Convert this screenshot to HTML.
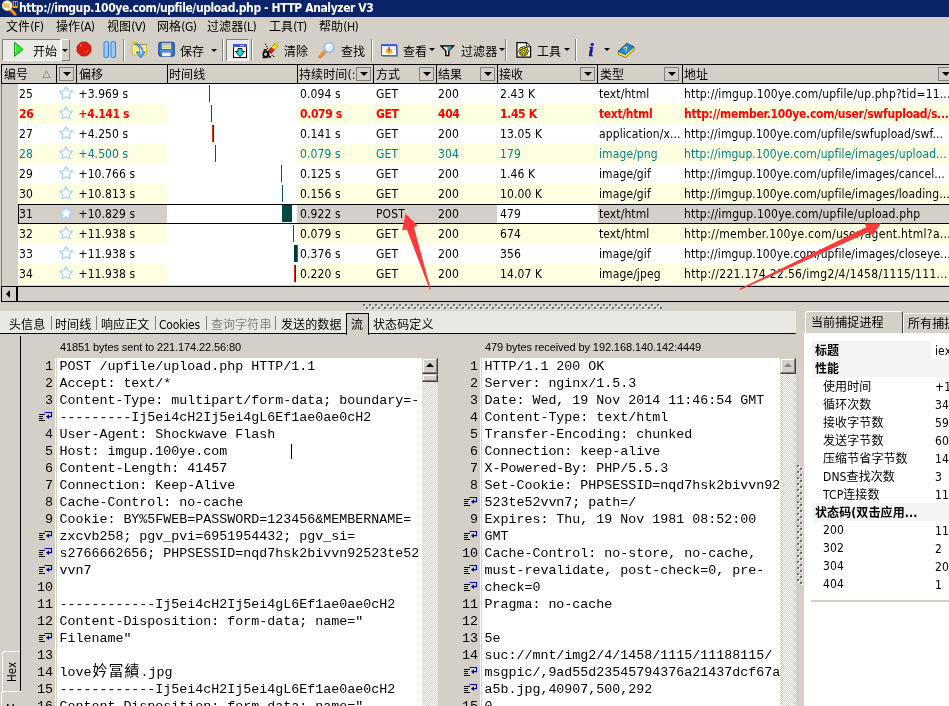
<!DOCTYPE html><html><head><meta charset="utf-8"><title>HTTP Analyzer V3</title><style>
html,body{margin:0;padding:0}
body{width:949px;height:706px;overflow:hidden;background:#d4d0c8;position:relative;font-family:"Liberation Sans","Noto Sans CJK SC",sans-serif;font-size:12px;color:#000;}
.a{position:absolute}
.t{position:absolute;white-space:nowrap;line-height:20px;height:20px;font-family:"DejaVu Sans Condensed","Liberation Sans",sans-serif;font-size:12px;letter-spacing:0.1px}
.cj{font-family:"Liberation Sans","Noto Sans CJK SC",sans-serif;font-size:12px}
.l{font-family:"DejaVu Sans Condensed","Liberation Sans",sans-serif;font-size:12px;letter-spacing:0.1px}
.mn .l{letter-spacing:-0.5px}
#tab3 .l{letter-spacing:-0.2px}
.ar{font-family:"Liberation Sans",sans-serif;font-size:11px;letter-spacing:0}
.mono{font-family:"Liberation Mono","Noto Sans CJK SC",monospace;font-size:13.33px;line-height:17px;height:17px;white-space:pre;position:absolute}
.ln{font-family:"Liberation Mono",monospace;font-size:13.33px;line-height:17px;height:17px;position:absolute;text-align:right;width:40px}
.hd{position:absolute;top:64px;height:18px;border:1px solid #000;background:#d4d0c8;box-sizing:content-box}
.dd{position:absolute;top:67px;width:13px;height:12px;border:1px solid #808080;background:#d4d0c8}
.dd:after{content:"";position:absolute;left:3px;top:4px;border:4px solid transparent;border-top:4px solid #000;border-bottom:0}
.sep{position:absolute;top:39px;width:1px;height:22px;background:#808080;border-right:1px solid #fff}
.arr{position:absolute;width:0;height:0;border:3px solid transparent;border-top:3px solid #000;border-bottom:0}
.red{color:#f00;font-weight:bold;letter-spacing:-0.34px}
.teal{color:#008080}
</style></head><body><div id="root" style="position:absolute;left:0;top:0;width:949px;height:706px;overflow:hidden;will-change:transform">
<div class="a" style="left:0;top:0;width:949px;height:17px;background:#0a246a"></div>
<div class="t" id="title" style="left:19px;top:0px;line-height:17px;height:17px;color:#fff;font-weight:bold;font-size:12px;letter-spacing:-0.4px">http://imgup.100ye.com/upfile/upload.php - HTTP Analyzer V3</div>
<svg class="a" style="left:1px;top:0" width="18" height="17" viewBox="0 0 18 17">
<path d="M9.4 9.6 L14 14.2" stroke="#b86010" stroke-width="3.6" stroke-linecap="round"/><path d="M9.4 9.4 L14 14" stroke="#f49820" stroke-width="2.2" stroke-linecap="round"/>
<circle cx="6.2" cy="5.6" r="4.7" fill="#fffef4" stroke="#f0d890" stroke-width="1.2"/>
<text x="2.6" y="8" font-family="Liberation Sans,sans-serif" font-size="6.6" font-weight="bold" fill="#e8a020">W</text>
<rect x="11.6" y="1" width="5.2" height="6.6" fill="#f09410"/><rect x="12.8" y="2" width="1.2" height="4" fill="#0a246a"/><rect x="14.8" y="2" width="1.2" height="4" fill="#0a246a"/><path d="M11.6 7.4 H16.8" stroke="#f8e060" stroke-width="0.6"/>
</svg>
<div class="t cj mn" id="m0" style="left:6px;top:17px">文件<span class="l">(F)</span></div>
<div class="t cj mn" id="m1" style="left:56px;top:17px">操作<span class="l">(A)</span></div>
<div class="t cj mn" id="m2" style="left:107px;top:17px">视图<span class="l">(V)</span></div>
<div class="t cj mn" id="m3" style="left:157px;top:17px">网格<span class="l">(G)</span></div>
<div class="t cj mn" id="m4" style="left:207px;top:17px">过滤器<span class="l">(L)</span></div>
<div class="t cj mn" id="m5" style="left:269px;top:17px">工具<span class="l">(T)</span></div>
<div class="t cj mn" id="m6" style="left:319px;top:17px">帮助<span class="l">(H)</span></div>
<div class="a" style="left:2px;top:39px;width:57px;height:20px;background:#ebe9e5;border:1px solid;border-color:#808080 #fff #fff #808080;box-sizing:content-box"></div>
<svg class="a" style="left:13px;top:41px" width="12" height="17" viewBox="0 0 12 17"><path d="M1.5 1.2 L10 8.3 L1.5 15.4 Z" fill="#30e430" stroke="#18a018" stroke-width="1"/><path d="M2.6 4 V11" stroke="#a0ffa0" stroke-width="0.8"/></svg>
<div class="t cj" id="tb0" style="left:33px;top:42px">开始</div>
<div class="a" style="left:61px;top:39px;width:7px;height:20px;border:1px solid;border-color:#fff #808080 #808080 #fff;box-sizing:content-box"></div>
<div class="arr" style="left:62px;top:49px"></div>
<svg class="a" style="left:76px;top:41px" width="16" height="16" viewBox="0 0 16 16"><path d="M5.2 1.2 H10.8 L14.8 5.2 V10.8 L10.8 14.8 H5.2 L1.2 10.8 V5.2 Z" fill="#e01c0c" stroke="#a81008" stroke-width="1"/><path d="M4 4.5 L6 3 L5.2 5.8 Z" fill="#ff9888"/><path d="M9 12.5 L12.5 9" stroke="#f84030" stroke-width="1.2"/></svg>
<svg class="a" style="left:103px;top:41px" width="14" height="17" viewBox="0 0 14 17"><rect x="1" y="0.5" width="4.5" height="16" rx="1.5" fill="#9cc8f4" stroke="#3482dc" stroke-width="1"/><rect x="8" y="0.5" width="4.5" height="16" rx="1.5" fill="#9cc8f4" stroke="#3482dc" stroke-width="1"/></svg>
<div class="sep" style="left:123px"></div>
<div class="sep" style="left:222px"></div>
<div class="sep" style="left:251px"></div>
<div class="sep" style="left:371px"></div>
<div class="sep" style="left:505px"></div>
<div class="sep" style="left:575px"></div>
<svg class="a" style="left:131px;top:41px" width="17" height="18" viewBox="0 0 17 18">
<path d="M1.5 4 V2 Q1.5 1.3 2.3 1.3 H5.8 Q6.6 1.3 6.8 2 L7.4 3.5 Z" fill="#f0d820" stroke="#c8a820" stroke-width="0.6"/>
<path d="M1.2 3.5 H15.6 V14 H1.2 Z" fill="#f6ec84" stroke="#d0b838" stroke-width="0.9"/>
<path d="M8 3.4 H15.8" stroke="#8c8c94" stroke-width="1"/>
<path d="M3.5 3.2 C7.5 4.2 9.2 7 9 11 L5.2 11 L9.8 17 L14.2 11 L11.8 11 C12 6.5 9 3.4 5.5 2.8 Z" fill="#64a8ec" stroke="#2c6cc0" stroke-width="0.8" stroke-linejoin="round"/>
<path d="M8.6 7 C9.4 8.8 9.6 10.2 9.4 12.4 L10.8 12.4 C11 10 10.4 8.4 8.6 7 Z" fill="#fff"/></svg>
<svg class="a" style="left:158px;top:41px" width="17" height="17" viewBox="0 0 17 17">
<rect x="0.8" y="1.4" width="15.4" height="13.8" rx="2.2" fill="#3c78d0" stroke="#1c4898" stroke-width="1.2"/>
<rect x="3.4" y="1.6" width="10" height="6.6" fill="#f6f2b0" stroke="#1c4898" stroke-width="0.5"/>
<path d="M4.2 3 H12.6" stroke="#4880d0" stroke-width="0.8"/><path d="M4.2 4.8 H12.6 M4.2 6.5 H12.6" stroke="#c8c070" stroke-width="0.8"/>
<rect x="4" y="11.6" width="8.6" height="3.6" fill="#f4f6fa"/><path d="M2.5 10 L14.5 10" stroke="#6ca0e4" stroke-width="1"/></svg>
<div class="t cj" id="tb1" style="left:180px;top:42px">保存</div>
<div class="arr" style="left:211px;top:49px"></div>
<div class="a" style="left:226px;top:39px;width:21px;height:20px;background:#ebe9e5;border:1px solid;border-color:#808080 #fff #fff #808080;box-sizing:content-box"></div>
<svg class="a" style="left:233px;top:44px" width="14" height="14" viewBox="0 0 14 14">
<rect x="0.5" y="2.5" width="13" height="11" fill="#fff" stroke="#000"/><rect x="0" y="0" width="14" height="3" fill="#3c5ccc"/>
<rect x="7.4" y="1" width="1.2" height="1.2" fill="#fff"/><rect x="9.4" y="1" width="1.2" height="1.2" fill="#fff"/><rect x="11.6" y="1" width="1.4" height="1.4" fill="#f02020"/>
<path d="M5 4.5 H9 V7.5 H11.6 L7 12.6 L2.4 7.5 H5 Z" fill="#00e8f8" stroke="#000" stroke-width="0.9" stroke-linejoin="miter"/></svg>
<svg class="a" style="left:261px;top:41px" width="18" height="18" viewBox="0 0 18 18">
<path d="M8.6 11.4 L12 7.6" stroke="#400000" stroke-width="4.4"/>
<path d="M12 7.6 L15.2 4" stroke="#807000" stroke-width="4.2"/>
<path d="M9 11 L12 7.6" stroke="#f01c1c" stroke-width="3.4"/>
<path d="M12 7.6 L15 4.2" stroke="#f4ec10" stroke-width="3.2"/>
<path d="M13.6 2.8 L17.4 0.8 L16.2 5 Z" fill="#f4ec10" stroke="#a09000" stroke-width="0.4"/>
<ellipse cx="4.6" cy="13.2" rx="2.3" ry="2.6" fill="none" stroke="#000" stroke-width="1.7"/>
<path d="M2.6 9.4 Q4.4 8.2 6 9.2 M7.4 10 L7.8 15 Q8.2 16.6 10 15.8 M1.6 16.4 H6.6" fill="none" stroke="#000" stroke-width="1.5"/>
<rect x="4" y="2.8" width="1.1" height="1.1" fill="#000"/><rect x="5.2" y="5" width="1.1" height="1.1" fill="#000"/><rect x="6" y="6.8" width="1.1" height="1.1" fill="#000"/><rect x="10.6" y="13.8" width="1.1" height="1.1" fill="#000"/><rect x="12.2" y="14.9" width="1.1" height="1.1" fill="#000"/></svg>
<div class="t cj" id="tb2" style="left:284px;top:42px">清除</div>
<svg class="a" style="left:318px;top:41px" width="18" height="18" viewBox="0 0 18 18">
<path d="M2 15.6 L7.6 10" stroke="#c87818" stroke-width="3.2" stroke-linecap="round"/><path d="M2 15.4 L7.6 9.8" stroke="#f4a030" stroke-width="1.8" stroke-linecap="round"/>
<circle cx="11" cy="6.4" r="4.9" fill="#daeefc" stroke="#9cb4ec" stroke-width="1.5"/><circle cx="10" cy="5.2" r="2.2" fill="#fff"/></svg>
<div class="t cj" id="tb3" style="left:341px;top:42px">查找</div>
<svg class="a" style="left:381px;top:44px" width="17" height="13" viewBox="0 0 17 13">
<rect x="0.5" y="0.5" width="15" height="11" fill="#fff" stroke="#3c68c8"/><rect x="1" y="0.6" width="14" height="1.7" fill="#3c68c8"/>
<rect x="15.8" y="1.4" width="1" height="11.2" fill="#707888"/><rect x="1.6" y="11.8" width="14.6" height="1" fill="#707888"/>
<path d="M8 3 L9.2 5.4 L11.8 4.8 L10.6 7 L12.2 8.8 L9.4 8.8 L8 11 L6.6 8.8 L3.8 8.8 L5.4 7 L4.2 4.8 L6.8 5.4 Z" fill="#f4a820"/><rect x="7.5" y="3" width="1.2" height="4" fill="#903010"/></svg>
<div class="t cj" id="tb4" style="left:403px;top:42px">查看</div>
<div class="arr" style="left:429px;top:48px"></div>
<svg class="a" style="left:440px;top:45px" width="15" height="12" viewBox="0 0 15 12">
<path d="M1 1 H13.6 L8.8 5.8 V10.6 H5.8 V5.8 Z" fill="#fff" stroke="#000" stroke-width="1.4" stroke-linejoin="miter"/><path d="M7.3 2 H12 L8.6 5.4 H7.3 Z" fill="#20b8b0"/><path d="M3 1.8 H11.5" stroke="#188880" stroke-width="0.8"/></svg>
<div class="t cj" id="tb5" style="left:461px;top:42px">过滤器</div>
<div class="arr" style="left:499px;top:48px"></div>
<svg class="a" style="left:516px;top:42px" width="16" height="16" viewBox="0 0 16 16.6">
<path d="M0.7 0.7 H10.4 L14.8 5 V15.8 H0.7 Z" fill="#fff" stroke="#000" stroke-width="1.3"/><path d="M10.4 0.7 V5 H14.8" fill="#d4d0c8" stroke="#000" stroke-width="0.9"/>
<circle cx="11.20" cy="9.60" r="1.5" fill="#f4ec00" stroke="#000" stroke-width="0.7"/><circle cx="10.15" cy="12.15" r="1.5" fill="#f4ec00" stroke="#000" stroke-width="0.7"/><circle cx="7.60" cy="13.20" r="1.5" fill="#f4ec00" stroke="#000" stroke-width="0.7"/><circle cx="5.05" cy="12.15" r="1.5" fill="#f4ec00" stroke="#000" stroke-width="0.7"/><circle cx="4.00" cy="9.60" r="1.5" fill="#f4ec00" stroke="#000" stroke-width="0.7"/><circle cx="5.05" cy="7.05" r="1.5" fill="#f4ec00" stroke="#000" stroke-width="0.7"/><circle cx="7.60" cy="6.00" r="1.5" fill="#f4ec00" stroke="#000" stroke-width="0.7"/><circle cx="10.15" cy="7.05" r="1.5" fill="#f4ec00" stroke="#000" stroke-width="0.7"/><circle cx="7.6" cy="9.6" r="2.9" fill="#f4ec00" stroke="#000" stroke-width="0.5"/><circle cx="7.6" cy="9.6" r="1.2" fill="#fff" stroke="#000" stroke-width="0.7"/></svg>
<div class="t cj" id="tb6" style="left:537px;top:42px">工具</div>
<div class="arr" style="left:564px;top:48px"></div>
<div class="a" style="left:588.5px;top:40px;font-family:Liberation Serif,serif;font-style:italic;font-weight:bold;font-size:19px;color:#1414a4;line-height:20px;height:20px;-webkit-text-stroke:0.4px #1414a4">i</div>
<div class="arr" style="left:604px;top:48px"></div>
<svg class="a" style="left:617px;top:42px" width="18" height="17" viewBox="0 0 18 17">
<path d="M1 9.6 L9.6 1.4 L17 4.8 L17 8 L8.4 15.6 L1 12.2 Z" fill="#f0d810" stroke="#786800" stroke-width="0.8" stroke-linejoin="round"/>
<path d="M1 9.6 L9.6 1.4 L17 4.8 L8.4 12.6 Z" fill="#2088dc" stroke="#0c50a0" stroke-width="0.8" stroke-linejoin="round"/>
<path d="M1.6 10.8 L8.4 14 L16.6 6.6" fill="none" stroke="#fff8a0" stroke-width="0.7"/>
<text x="6.6" y="9.8" font-family="Liberation Sans,sans-serif" font-size="7.5" font-weight="bold" fill="#f8f040" transform="rotate(-12 9 8)">?</text></svg>
<div class="a" style="left:1px;top:64px;width:948px;height:20px;background:#d4d0c8;border-top:1px solid #000;border-bottom:1px solid #000;box-sizing:border-box"></div>
<div class="a" style="left:1px;top:64px;width:1px;height:20px;background:#000"></div>
<div class="a" style="left:56px;top:64px;width:1px;height:20px;background:#000"></div>
<div class="a" style="left:76px;top:64px;width:1px;height:20px;background:#000"></div>
<div class="a" style="left:167px;top:64px;width:1px;height:20px;background:#000"></div>
<div class="a" style="left:297px;top:64px;width:1px;height:20px;background:#000"></div>
<div class="a" style="left:373px;top:64px;width:1px;height:20px;background:#000"></div>
<div class="a" style="left:436px;top:64px;width:1px;height:20px;background:#000"></div>
<div class="a" style="left:497px;top:64px;width:1px;height:20px;background:#000"></div>
<div class="a" style="left:597px;top:64px;width:1px;height:20px;background:#000"></div>
<div class="a" style="left:682px;top:64px;width:1px;height:20px;background:#000"></div>
<div class="t cj" id="h0" style="left:4px;top:65px">编号</div>
<div class="t cj" id="h2" style="left:79px;top:65px">偏移</div>
<div class="t cj" id="h3" style="left:169px;top:65px">时间线</div>
<div class="t cj" id="h4" style="left:299px;top:65px">持续时间<span class="l">(:</span></div>
<div class="dd" style="left:356px"></div>
<div class="t cj" id="h5" style="left:376px;top:65px">方式</div>
<div class="dd" style="left:419px"></div>
<div class="t cj" id="h6" style="left:438px;top:65px">结果</div>
<div class="dd" style="left:480px"></div>
<div class="t cj" id="h7" style="left:499px;top:65px">接收</div>
<div class="dd" style="left:580px"></div>
<div class="t cj" id="h8" style="left:600px;top:65px">类型</div>
<div class="dd" style="left:664px"></div>
<div class="t cj" id="h9" style="left:684px;top:65px">地址</div>
<div class="dd" style="left:938px"></div>
<div class="dd" style="left:59px"></div>
<svg class="a" style="left:42px;top:69px" width="9" height="10" viewBox="0 0 9 10"><path d="M1 8.5 L4.5 1.8 L8 8.5 Z" fill="#d4d0c8" stroke="#8c8c8c" stroke-width="1"/></svg>
<div class="a" style="left:1px;top:84px;width:1px;height:202px;background:#808080"></div>
<div class="a" style="left:18px;top:84px;width:931px;height:201px;background:#fff"></div>
<svg class="a" style="left:58px;top:85px" width="16" height="16" viewBox="0 0 16 16"><path d="M8.0 1.7 L10.0 5.6 L14.4 6.3 L11.2 9.5 L11.9 13.8 L8.0 11.8 L4.1 13.8 L4.8 9.5 L1.6 6.3 L6.0 5.6 Z" fill="#fff" stroke="#acd0fa" stroke-width="1.3" stroke-linejoin="round"/></svg>
<div class="t " id="r0c0" style="left:19px;top:84px">25</div>
<div class="t " id="r0c1" style="left:78.5px;top:84px">+3.969 s</div>
<div class="t " id="r0c2" style="left:300px;top:84px">0.094 s</div>
<div class="t " id="r0c3" style="left:376px;top:84px">GET</div>
<div class="t " id="r0c4" style="left:438px;top:84px">200</div>
<div class="t " id="r0c5" style="left:500px;top:84px">2.43 K</div>
<div class="t " id="r0c6" style="left:599px;top:84px">text/html</div>
<div class="t " id="r0c7" style="left:684px;top:84px;letter-spacing:0.17px">http://imgup.100ye.com/upfile/up.php?tid=11...</div>
<div class="a" style="left:18px;top:104px;width:149px;height:20px;background:#ffffe1"></div>
<div class="a" style="left:297px;top:104px;width:652px;height:20px;background:#ffffe1"></div>
<svg class="a" style="left:58px;top:105px" width="16" height="16" viewBox="0 0 16 16"><path d="M8.0 1.7 L10.0 5.6 L14.4 6.3 L11.2 9.5 L11.9 13.8 L8.0 11.8 L4.1 13.8 L4.8 9.5 L1.6 6.3 L6.0 5.6 Z" fill="#fff" stroke="#acd0fa" stroke-width="1.3" stroke-linejoin="round"/></svg>
<div class="t red" id="r1c0" style="left:19px;top:104px">26</div>
<div class="t red" id="r1c1" style="left:78.5px;top:104px">+4.141 s</div>
<div class="t red" id="r1c2" style="left:300px;top:104px">0.079 s</div>
<div class="t red" id="r1c3" style="left:376px;top:104px">GET</div>
<div class="t red" id="r1c4" style="left:438px;top:104px">404</div>
<div class="t red" id="r1c5" style="left:500px;top:104px">1.45 K</div>
<div class="t red" id="r1c6" style="left:599px;top:104px">text/html</div>
<div class="t red" id="r1c7" style="left:684px;top:104px;letter-spacing:-0.28px">http://member.100ye.com/user/swfupload/s...</div>
<svg class="a" style="left:58px;top:125px" width="16" height="16" viewBox="0 0 16 16"><path d="M8.0 1.7 L10.0 5.6 L14.4 6.3 L11.2 9.5 L11.9 13.8 L8.0 11.8 L4.1 13.8 L4.8 9.5 L1.6 6.3 L6.0 5.6 Z" fill="#fff" stroke="#acd0fa" stroke-width="1.3" stroke-linejoin="round"/></svg>
<div class="t " id="r2c0" style="left:19px;top:124px">27</div>
<div class="t " id="r2c1" style="left:78.5px;top:124px">+4.250 s</div>
<div class="t " id="r2c2" style="left:300px;top:124px">0.141 s</div>
<div class="t " id="r2c3" style="left:376px;top:124px">GET</div>
<div class="t " id="r2c4" style="left:438px;top:124px">200</div>
<div class="t " id="r2c5" style="left:500px;top:124px">13.05 K</div>
<div class="t " id="r2c6" style="left:599px;top:124px">application/x...</div>
<div class="t " id="r2c7" style="left:684px;top:124px">http://imgup.100ye.com/upfile/swfupload/swf...</div>
<div class="a" style="left:18px;top:144px;width:149px;height:20px;background:#ffffe1"></div>
<div class="a" style="left:297px;top:144px;width:652px;height:20px;background:#ffffe1"></div>
<svg class="a" style="left:58px;top:145px" width="16" height="16" viewBox="0 0 16 16"><path d="M8.0 1.7 L10.0 5.6 L14.4 6.3 L11.2 9.5 L11.9 13.8 L8.0 11.8 L4.1 13.8 L4.8 9.5 L1.6 6.3 L6.0 5.6 Z" fill="#fff" stroke="#acd0fa" stroke-width="1.3" stroke-linejoin="round"/></svg>
<div class="t teal" id="r3c0" style="left:19px;top:144px">28</div>
<div class="t teal" id="r3c1" style="left:78.5px;top:144px">+4.500 s</div>
<div class="t teal" id="r3c2" style="left:300px;top:144px">0.079 s</div>
<div class="t teal" id="r3c3" style="left:376px;top:144px">GET</div>
<div class="t teal" id="r3c4" style="left:438px;top:144px">304</div>
<div class="t teal" id="r3c5" style="left:500px;top:144px">179</div>
<div class="t teal" id="r3c6" style="left:599px;top:144px">image/png</div>
<div class="t teal" id="r3c7" style="left:684px;top:144px">http://imgup.100ye.com/upfile/images/upload...</div>
<svg class="a" style="left:58px;top:165px" width="16" height="16" viewBox="0 0 16 16"><path d="M8.0 1.7 L10.0 5.6 L14.4 6.3 L11.2 9.5 L11.9 13.8 L8.0 11.8 L4.1 13.8 L4.8 9.5 L1.6 6.3 L6.0 5.6 Z" fill="#fff" stroke="#acd0fa" stroke-width="1.3" stroke-linejoin="round"/></svg>
<div class="t " id="r4c0" style="left:19px;top:164px">29</div>
<div class="t " id="r4c1" style="left:78.5px;top:164px">+10.766 s</div>
<div class="t " id="r4c2" style="left:300px;top:164px">0.125 s</div>
<div class="t " id="r4c3" style="left:376px;top:164px">GET</div>
<div class="t " id="r4c4" style="left:438px;top:164px">200</div>
<div class="t " id="r4c5" style="left:500px;top:164px">1.46 K</div>
<div class="t " id="r4c6" style="left:599px;top:164px">image/gif</div>
<div class="t " id="r4c7" style="left:684px;top:164px">http://imgup.100ye.com/upfile/images/cancel...</div>
<div class="a" style="left:18px;top:184px;width:149px;height:20px;background:#ffffe1"></div>
<div class="a" style="left:297px;top:184px;width:652px;height:20px;background:#ffffe1"></div>
<svg class="a" style="left:58px;top:185px" width="16" height="16" viewBox="0 0 16 16"><path d="M8.0 1.7 L10.0 5.6 L14.4 6.3 L11.2 9.5 L11.9 13.8 L8.0 11.8 L4.1 13.8 L4.8 9.5 L1.6 6.3 L6.0 5.6 Z" fill="#fff" stroke="#acd0fa" stroke-width="1.3" stroke-linejoin="round"/></svg>
<div class="t " id="r5c0" style="left:19px;top:184px">30</div>
<div class="t " id="r5c1" style="left:78.5px;top:184px">+10.813 s</div>
<div class="t " id="r5c2" style="left:300px;top:184px">0.156 s</div>
<div class="t " id="r5c3" style="left:376px;top:184px">GET</div>
<div class="t " id="r5c4" style="left:438px;top:184px">200</div>
<div class="t " id="r5c5" style="left:500px;top:184px">10.00 K</div>
<div class="t " id="r5c6" style="left:599px;top:184px">image/gif</div>
<div class="t " id="r5c7" style="left:684px;top:184px">http://imgup.100ye.com/upfile/images/loading...</div>
<div class="a" style="left:18px;top:204px;width:931px;height:20px;background:#d4d0c8"></div>
<div class="a" style="left:167px;top:204px;width:130px;height:20px;background:#fff"></div>
<div class="a" style="left:497px;top:204px;width:101px;height:20px;background:#fff"></div>
<div class="a" style="left:18px;top:204px;width:931px;height:1px;background:#000"></div>
<div class="a" style="left:18px;top:223px;width:931px;height:1px;background:#000"></div>
<div class="a" style="left:18px;top:204px;width:1px;height:20px;background:#000"></div>
<svg class="a" style="left:58px;top:205px" width="16" height="16" viewBox="0 0 16 16"><path d="M8.0 1.7 L10.0 5.6 L14.4 6.3 L11.2 9.5 L11.9 13.8 L8.0 11.8 L4.1 13.8 L4.8 9.5 L1.6 6.3 L6.0 5.6 Z" fill="#fff" stroke="#acd0fa" stroke-width="1.3" stroke-linejoin="round"/></svg>
<div class="t " id="r6c0" style="left:19px;top:204px">31</div>
<div class="t " id="r6c1" style="left:78.5px;top:204px">+10.829 s</div>
<div class="t " id="r6c2" style="left:300px;top:204px">0.922 s</div>
<div class="t " id="r6c3" style="left:376px;top:204px">POST</div>
<div class="t " id="r6c4" style="left:438px;top:204px">200</div>
<div class="t " id="r6c5" style="left:500px;top:204px">479</div>
<div class="t " id="r6c6" style="left:599px;top:204px">text/html</div>
<div class="t " id="r6c7" style="left:684px;top:204px;letter-spacing:0.185px">http://imgup.100ye.com/upfile/upload.php</div>
<div class="a" style="left:18px;top:224px;width:149px;height:20px;background:#ffffe1"></div>
<div class="a" style="left:297px;top:224px;width:652px;height:20px;background:#ffffe1"></div>
<svg class="a" style="left:58px;top:225px" width="16" height="16" viewBox="0 0 16 16"><path d="M8.0 1.7 L10.0 5.6 L14.4 6.3 L11.2 9.5 L11.9 13.8 L8.0 11.8 L4.1 13.8 L4.8 9.5 L1.6 6.3 L6.0 5.6 Z" fill="#fff" stroke="#acd0fa" stroke-width="1.3" stroke-linejoin="round"/></svg>
<div class="t " id="r7c0" style="left:19px;top:224px">32</div>
<div class="t " id="r7c1" style="left:78.5px;top:224px">+11.938 s</div>
<div class="t " id="r7c2" style="left:300px;top:224px">0.079 s</div>
<div class="t " id="r7c3" style="left:376px;top:224px">GET</div>
<div class="t " id="r7c4" style="left:438px;top:224px">200</div>
<div class="t " id="r7c5" style="left:500px;top:224px">674</div>
<div class="t " id="r7c6" style="left:599px;top:224px">text/html</div>
<div class="t " id="r7c7" style="left:684px;top:224px;letter-spacing:0.3px">http://member.100ye.com/user/agent.html?a...</div>
<svg class="a" style="left:58px;top:245px" width="16" height="16" viewBox="0 0 16 16"><path d="M8.0 1.7 L10.0 5.6 L14.4 6.3 L11.2 9.5 L11.9 13.8 L8.0 11.8 L4.1 13.8 L4.8 9.5 L1.6 6.3 L6.0 5.6 Z" fill="#fff" stroke="#acd0fa" stroke-width="1.3" stroke-linejoin="round"/></svg>
<div class="t " id="r8c0" style="left:19px;top:244px">33</div>
<div class="t " id="r8c1" style="left:78.5px;top:244px">+11.938 s</div>
<div class="t " id="r8c2" style="left:300px;top:244px">0.376 s</div>
<div class="t " id="r8c3" style="left:376px;top:244px">GET</div>
<div class="t " id="r8c4" style="left:438px;top:244px">200</div>
<div class="t " id="r8c5" style="left:500px;top:244px">356</div>
<div class="t " id="r8c6" style="left:599px;top:244px">image/gif</div>
<div class="t " id="r8c7" style="left:684px;top:244px">http://imgup.100ye.com/upfile/images/closeye...</div>
<div class="a" style="left:18px;top:264px;width:149px;height:20px;background:#ffffe1"></div>
<div class="a" style="left:297px;top:264px;width:652px;height:20px;background:#ffffe1"></div>
<svg class="a" style="left:58px;top:265px" width="16" height="16" viewBox="0 0 16 16"><path d="M8.0 1.7 L10.0 5.6 L14.4 6.3 L11.2 9.5 L11.9 13.8 L8.0 11.8 L4.1 13.8 L4.8 9.5 L1.6 6.3 L6.0 5.6 Z" fill="#fff" stroke="#acd0fa" stroke-width="1.3" stroke-linejoin="round"/></svg>
<div class="t " id="r9c0" style="left:19px;top:264px">34</div>
<div class="t " id="r9c1" style="left:78.5px;top:264px">+11.938 s</div>
<div class="t " id="r9c2" style="left:300px;top:264px">0.220 s</div>
<div class="t " id="r9c3" style="left:376px;top:264px">GET</div>
<div class="t " id="r9c4" style="left:438px;top:264px">200</div>
<div class="t " id="r9c5" style="left:500px;top:264px">14.07 K</div>
<div class="t " id="r9c6" style="left:599px;top:264px">image/jpeg</div>
<div class="t " id="r9c7" style="left:684px;top:264px;letter-spacing:0.31px">http://221.174.22.56/img2/4/1458/1115/111...</div>
<div class="a" style="left:209px;top:85px;width:1px;height:17px;background:#005858"></div>
<div class="a" style="left:211px;top:105px;width:1px;height:17px;background:#005858"></div>
<div class="a" style="left:212px;top:125px;width:1px;height:17px;background:#e03010"></div>
<div class="a" style="left:213px;top:125px;width:1px;height:17px;background:#003838"></div>
<div class="a" style="left:215px;top:145px;width:1px;height:17px;background:#005858"></div>
<div class="a" style="left:281px;top:165px;width:1px;height:17px;background:#005858"></div>
<div class="a" style="left:282px;top:185px;width:1px;height:17px;background:#005858"></div>
<div class="a" style="left:282px;top:205px;width:10px;height:17px;background:#004848"></div>
<div class="a" style="left:293px;top:225px;width:1px;height:17px;background:#005858"></div>
<div class="a" style="left:294px;top:245px;width:3px;height:17px;background:#003838"></div>
<div class="a" style="left:297px;top:245px;width:1px;height:17px;background:#e03010"></div>
<div class="a" style="left:294px;top:265px;width:1px;height:17px;background:#e03010"></div>
<div class="a" style="left:295px;top:265px;width:1px;height:17px;background:#003838"></div>
<div class="a" style="left:1px;top:286px;width:948px;height:14px;border:1px solid #000;border-right:0;background:#d4d0c8;box-sizing:content-box"></div>
<div class="a" style="left:16px;top:286px;width:2px;height:15px;background:#000"></div>
<div class="a" style="left:6px;top:290px;width:0;height:0;border:4px solid transparent;border-right:4px solid #000;border-left:0"></div>
<svg class="a" style="left:0;top:0" width="949" height="706" viewBox="0 0 949 706">
<polygon points="405.5,213.4 417.5,225.5 414,227.6 430.8,289.4 429.8,290 407,229.7 402.2,229.9" fill="#fc3a3c"/>
<polygon points="881,223.3 864.4,223.4 866.5,227 739.6,288.8 740.2,290 869,232 872.5,235.8" fill="#fc3a3c"/>
</svg>
<div class="a" style="left:0;top:311px;width:796px;height:22px;background:#eae8e3"></div>
<div class="a" style="left:0;top:333px;width:796px;height:1px;background:#000"></div>
<svg class="a" style="left:363px;top:304px" width="300" height="6"><defs><pattern id="gp" width="6" height="6" patternUnits="userSpaceOnUse"><rect x="1" y="1" width="2" height="2" fill="#fff"/><rect x="0" y="0" width="2" height="2" fill="#6c6c6c"/><rect x="4" y="4" width="2" height="2" fill="#fff"/><rect x="3" y="3" width="2" height="2" fill="#6c6c6c"/></pattern></defs><rect width="300" height="6" fill="url(#gp)"/></svg>
<div class="t cj" id="tab0" style="left:9px;top:315px;color:#000">头信息</div>
<div class="t cj" id="tab1" style="left:55px;top:315px;color:#000">时间线</div>
<div class="t cj" id="tab2" style="left:101px;top:315px;color:#000">响应正文</div>
<div class="t cj" id="tab3" style="left:159px;top:315px;color:#000"><span class="l">Cookies</span></div>
<div class="t cj" id="tab4" style="left:211px;top:315px;color:#808080">查询字符串</div>
<div class="t cj" id="tab5" style="left:281px;top:315px;color:#000">发送的数据</div>
<div class="a" style="left:346px;top:313px;width:21px;height:21px;background:#d4d0c8;border:1px solid #000;border-bottom:0;box-sizing:content-box"></div>
<div class="t cj" id="tab6" style="left:351px;top:315px;color:#000">流</div>
<div class="t cj" id="tab7" style="left:373px;top:315px;color:#000">状态码定义</div>
<div class="a" style="left:51px;top:316px;width:1px;height:14px;background:#808080"></div>
<div class="a" style="left:96px;top:316px;width:1px;height:14px;background:#808080"></div>
<div class="a" style="left:155px;top:316px;width:1px;height:14px;background:#808080"></div>
<div class="a" style="left:206px;top:316px;width:1px;height:14px;background:#808080"></div>
<div class="a" style="left:275px;top:316px;width:1px;height:14px;background:#808080"></div>
<div class="a" style="left:20px;top:336px;width:1px;height:355px;background:#000"></div>
<div class="a" style="left:2px;top:651px;width:18px;height:41px;border:1px solid #fff;border-right:0;border-radius:3px 0 0 0;box-sizing:border-box"></div>
<div class="a l" style="left:3px;top:682px;transform-origin:0 0;transform:rotate(-90deg);line-height:19px;height:19px;white-space:nowrap;letter-spacing:0;font-size:11.5px">Hex</div>
<div class="a" style="left:1px;top:691px;width:21px;height:20px;border:1px solid #fff;border-right:0;border-radius:3px 0 0 0;box-sizing:border-box;background:#d4d0c8"></div>
<div class="a l" style="left:1px;top:729px;transform-origin:0 0;transform:rotate(-90deg);line-height:19px;height:19px;white-space:nowrap;font-weight:bold;letter-spacing:0">Text</div>
<div class="t ar" id="lb1" style="left:60px;top:337px;letter-spacing:-0.1px">41851 bytes sent to 221.174.22.56:80</div>
<div class="t ar" id="lb2" style="left:485px;top:337px;letter-spacing:-0.1px">479 bytes received by 192.168.140.142:4449</div>
<div class="a" style="left:55px;top:358px;width:367px;height:348px;background:#fff"></div>
<div class="a" style="left:480px;top:358px;width:300px;height:348px;background:#fff"></div>
<div class="a" style="left:56px;top:358px;width:1px;height:348px;background:#d4d0c8"></div>
<div class="a" style="left:481px;top:358px;width:1px;height:348px;background:#d4d0c8"></div>
<div class="ln" style="left:13px;top:358px">1</div>
<div class="mono" id="L0" style="left:59.4px;top:358px">POST /upfile/upload.php HTTP/1.1</div>
<div class="ln" style="left:13px;top:375px">2</div>
<div class="mono" id="L1" style="left:59.4px;top:375px">Accept: text/*</div>
<div class="ln" style="left:13px;top:392px">3</div>
<div class="mono" id="L2" style="left:59.4px;top:392px">Content-Type: multipart/form-data; boundary=-</div>
<svg class="a" style="left:38px;top:411px" width="15" height="11" viewBox="0 0 15 11"><path d="M1 3.5 H7 M1 5.5 H5 M1 7.5 H5 M1 9.5 H7" stroke="#000" stroke-width="1"/><path d="M6.5 1.5 H13.5 V5.6 H10" fill="none" stroke="#0000a0" stroke-width="1.1"/><path d="M8 5.7 L11 3.3 V8.1 Z" fill="#0000a0"/></svg>
<div class="mono" id="L3" style="left:59.4px;top:409px">---------Ij5ei4cH2Ij5ei4gL6Ef1ae0ae0cH2</div>
<div class="ln" style="left:13px;top:426px">4</div>
<div class="mono" id="L4" style="left:59.4px;top:426px">User-Agent: Shockwave Flash</div>
<div class="ln" style="left:13px;top:443px">5</div>
<div class="mono" id="L5" style="left:59.4px;top:443px">Host: imgup.100ye.com</div>
<div class="ln" style="left:13px;top:460px">6</div>
<div class="mono" id="L6" style="left:59.4px;top:460px">Content-Length: 41457</div>
<div class="ln" style="left:13px;top:477px">7</div>
<div class="mono" id="L7" style="left:59.4px;top:477px">Connection: Keep-Alive</div>
<div class="ln" style="left:13px;top:494px">8</div>
<div class="mono" id="L8" style="left:59.4px;top:494px">Cache-Control: no-cache</div>
<div class="ln" style="left:13px;top:511px">9</div>
<div class="mono" id="L9" style="left:59.4px;top:511px">Cookie: BY%5FWEB=PASSWORD=123456&amp;MEMBERNAME=</div>
<svg class="a" style="left:38px;top:530px" width="15" height="11" viewBox="0 0 15 11"><path d="M1 3.5 H7 M1 5.5 H5 M1 7.5 H5 M1 9.5 H7" stroke="#000" stroke-width="1"/><path d="M6.5 1.5 H13.5 V5.6 H10" fill="none" stroke="#0000a0" stroke-width="1.1"/><path d="M8 5.7 L11 3.3 V8.1 Z" fill="#0000a0"/></svg>
<div class="mono" id="L10" style="left:59.4px;top:528px">zxcvb258; pgv_pvi=6951954432; pgv_si=</div>
<svg class="a" style="left:38px;top:547px" width="15" height="11" viewBox="0 0 15 11"><path d="M1 3.5 H7 M1 5.5 H5 M1 7.5 H5 M1 9.5 H7" stroke="#000" stroke-width="1"/><path d="M6.5 1.5 H13.5 V5.6 H10" fill="none" stroke="#0000a0" stroke-width="1.1"/><path d="M8 5.7 L11 3.3 V8.1 Z" fill="#0000a0"/></svg>
<div class="mono" id="L11" style="left:59.4px;top:545px">s2766662656; PHPSESSID=nqd7hsk2bivvn92523te52</div>
<svg class="a" style="left:38px;top:564px" width="15" height="11" viewBox="0 0 15 11"><path d="M1 3.5 H7 M1 5.5 H5 M1 7.5 H5 M1 9.5 H7" stroke="#000" stroke-width="1"/><path d="M6.5 1.5 H13.5 V5.6 H10" fill="none" stroke="#0000a0" stroke-width="1.1"/><path d="M8 5.7 L11 3.3 V8.1 Z" fill="#0000a0"/></svg>
<div class="mono" id="L12" style="left:59.4px;top:562px">vvn7</div>
<div class="ln" style="left:13px;top:579px">10</div>
<div class="ln" style="left:13px;top:596px">11</div>
<div class="mono" id="L14" style="left:59.4px;top:596px">------------Ij5ei4cH2Ij5ei4gL6Ef1ae0ae0cH2</div>
<div class="ln" style="left:13px;top:613px">12</div>
<div class="mono" id="L15" style="left:59.4px;top:613px">Content-Disposition: form-data; name=&quot;</div>
<svg class="a" style="left:38px;top:632px" width="15" height="11" viewBox="0 0 15 11"><path d="M1 3.5 H7 M1 5.5 H5 M1 7.5 H5 M1 9.5 H7" stroke="#000" stroke-width="1"/><path d="M6.5 1.5 H13.5 V5.6 H10" fill="none" stroke="#0000a0" stroke-width="1.1"/><path d="M8 5.7 L11 3.3 V8.1 Z" fill="#0000a0"/></svg>
<div class="mono" id="L16" style="left:59.4px;top:630px">Filename&quot;</div>
<div class="ln" style="left:13px;top:647px">13</div>
<div class="ln" style="left:13px;top:664px">14</div>
<div class="mono" id="L18" style="left:59.4px;top:664px">love<span style="font-size:15px;letter-spacing:1px;margin-left:1px;line-height:10px">妗冨績</span>.jpg</div>
<div class="ln" style="left:13px;top:681px">15</div>
<div class="mono" id="L19" style="left:59.4px;top:681px">------------Ij5ei4cH2Ij5ei4gL6Ef1ae0ae0cH2</div>
<div class="ln" style="left:13px;top:698px">16</div>
<div class="mono" id="L20" style="left:59.4px;top:698px">Content-Disposition: form-data; name=&quot;</div>
<div class="ln" style="left:438px;top:358px">1</div>
<div class="mono" id="R0" style="left:484.4px;top:358px">HTTP/1.1 200 OK</div>
<div class="ln" style="left:438px;top:375px">2</div>
<div class="mono" id="R1" style="left:484.4px;top:375px">Server: nginx/1.5.3</div>
<div class="ln" style="left:438px;top:392px">3</div>
<div class="mono" id="R2" style="left:484.4px;top:392px">Date: Wed, 19 Nov 2014 11:46:54 GMT</div>
<div class="ln" style="left:438px;top:409px">4</div>
<div class="mono" id="R3" style="left:484.4px;top:409px">Content-Type: text/html</div>
<div class="ln" style="left:438px;top:426px">5</div>
<div class="mono" id="R4" style="left:484.4px;top:426px">Transfer-Encoding: chunked</div>
<div class="ln" style="left:438px;top:443px">6</div>
<div class="mono" id="R5" style="left:484.4px;top:443px">Connection: keep-alive</div>
<div class="ln" style="left:438px;top:460px">7</div>
<div class="mono" id="R6" style="left:484.4px;top:460px">X-Powered-By: PHP/5.5.3</div>
<div class="ln" style="left:438px;top:477px">8</div>
<div class="mono" id="R7" style="left:484.4px;top:477px">Set-Cookie: PHPSESSID=nqd7hsk2bivvn92</div>
<svg class="a" style="left:463px;top:496px" width="15" height="11" viewBox="0 0 15 11"><path d="M1 3.5 H7 M1 5.5 H5 M1 7.5 H5 M1 9.5 H7" stroke="#000" stroke-width="1"/><path d="M6.5 1.5 H13.5 V5.6 H10" fill="none" stroke="#0000a0" stroke-width="1.1"/><path d="M8 5.7 L11 3.3 V8.1 Z" fill="#0000a0"/></svg>
<div class="mono" id="R8" style="left:484.4px;top:494px">523te52vvn7; path=/</div>
<div class="ln" style="left:438px;top:511px">9</div>
<div class="mono" id="R9" style="left:484.4px;top:511px">Expires: Thu, 19 Nov 1981 08:52:00</div>
<svg class="a" style="left:463px;top:530px" width="15" height="11" viewBox="0 0 15 11"><path d="M1 3.5 H7 M1 5.5 H5 M1 7.5 H5 M1 9.5 H7" stroke="#000" stroke-width="1"/><path d="M6.5 1.5 H13.5 V5.6 H10" fill="none" stroke="#0000a0" stroke-width="1.1"/><path d="M8 5.7 L11 3.3 V8.1 Z" fill="#0000a0"/></svg>
<div class="mono" id="R10" style="left:484.4px;top:528px">GMT</div>
<div class="ln" style="left:438px;top:545px">10</div>
<div class="mono" id="R11" style="left:484.4px;top:545px">Cache-Control: no-store, no-cache,</div>
<svg class="a" style="left:463px;top:564px" width="15" height="11" viewBox="0 0 15 11"><path d="M1 3.5 H7 M1 5.5 H5 M1 7.5 H5 M1 9.5 H7" stroke="#000" stroke-width="1"/><path d="M6.5 1.5 H13.5 V5.6 H10" fill="none" stroke="#0000a0" stroke-width="1.1"/><path d="M8 5.7 L11 3.3 V8.1 Z" fill="#0000a0"/></svg>
<div class="mono" id="R12" style="left:484.4px;top:562px">must-revalidate, post-check=0, pre-</div>
<svg class="a" style="left:463px;top:581px" width="15" height="11" viewBox="0 0 15 11"><path d="M1 3.5 H7 M1 5.5 H5 M1 7.5 H5 M1 9.5 H7" stroke="#000" stroke-width="1"/><path d="M6.5 1.5 H13.5 V5.6 H10" fill="none" stroke="#0000a0" stroke-width="1.1"/><path d="M8 5.7 L11 3.3 V8.1 Z" fill="#0000a0"/></svg>
<div class="mono" id="R13" style="left:484.4px;top:579px">check=0</div>
<div class="ln" style="left:438px;top:596px">11</div>
<div class="mono" id="R14" style="left:484.4px;top:596px">Pragma: no-cache</div>
<div class="ln" style="left:438px;top:613px">12</div>
<div class="ln" style="left:438px;top:630px">13</div>
<div class="mono" id="R16" style="left:484.4px;top:630px">5e</div>
<div class="ln" style="left:438px;top:647px">14</div>
<div class="mono" id="R17" style="left:484.4px;top:647px">suc://mnt/img2/4/1458/1115/11188115/</div>
<svg class="a" style="left:463px;top:666px" width="15" height="11" viewBox="0 0 15 11"><path d="M1 3.5 H7 M1 5.5 H5 M1 7.5 H5 M1 9.5 H7" stroke="#000" stroke-width="1"/><path d="M6.5 1.5 H13.5 V5.6 H10" fill="none" stroke="#0000a0" stroke-width="1.1"/><path d="M8 5.7 L11 3.3 V8.1 Z" fill="#0000a0"/></svg>
<div class="mono" id="R18" style="left:484.4px;top:664px">msgpic/,9ad55d23545794376a21437dcf67a</div>
<svg class="a" style="left:463px;top:683px" width="15" height="11" viewBox="0 0 15 11"><path d="M1 3.5 H7 M1 5.5 H5 M1 7.5 H5 M1 9.5 H7" stroke="#000" stroke-width="1"/><path d="M6.5 1.5 H13.5 V5.6 H10" fill="none" stroke="#0000a0" stroke-width="1.1"/><path d="M8 5.7 L11 3.3 V8.1 Z" fill="#0000a0"/></svg>
<div class="mono" id="R19" style="left:484.4px;top:681px">a5b.jpg,40907,500,292</div>
<div class="ln" style="left:438px;top:698px">15</div>
<div class="mono" id="R20" style="left:484.4px;top:698px">0</div>
<div class="a" style="left:422px;top:358px;width:16px;height:348px;background-color:#fff;background-image:conic-gradient(#d4d0c8 25%,#fff 0 50%,#d4d0c8 0 75%,#fff 0);background-size:2px 2px"></div>
<div class="a" style="left:780px;top:358px;width:16px;height:348px;background-color:#fff;background-image:conic-gradient(#d4d0c8 25%,#fff 0 50%,#d4d0c8 0 75%,#fff 0);background-size:2px 2px"></div>
<div class="a" style="left:422px;top:358px;width:16px;height:16px;background:#d4d0c8;border:1px solid;border-color:#d4d0c8 #404040 #404040 #d4d0c8;box-shadow:inset -1px -1px 0 #808080,inset 1px 1px 0 #fff;box-sizing:border-box"></div>
<div class="a" style="left:426px;top:363px;width:0;height:0;border:4px solid transparent;border-bottom:4px solid #000;border-top:0"></div>
<div class="a" style="left:422px;top:374px;width:16px;height:8px;background:#d4d0c8;border:1px solid;border-color:#d4d0c8 #404040 #404040 #d4d0c8;box-shadow:inset -1px -1px 0 #808080,inset 1px 1px 0 #fff;box-sizing:border-box"></div>
<div class="a" style="left:780px;top:358px;width:16px;height:16px;background:#d4d0c8;border:1px solid;border-color:#d4d0c8 #404040 #404040 #d4d0c8;box-shadow:inset -1px -1px 0 #808080,inset 1px 1px 0 #fff;box-sizing:border-box"></div>
<div class="a" style="left:784px;top:363px;width:0;height:0;border:4px solid transparent;border-bottom:4px solid #808080;border-top:0"></div>
<div class="a" style="left:291px;top:444px;width:1px;height:15px;background:#000"></div>
<svg class="a" style="left:797px;top:465px" width="6" height="120"><rect width="6" height="120" fill="url(#gp)"/></svg>
<div class="a" style="left:804px;top:333px;width:145px;height:373px;background:#fff"></div>
<div class="a" style="left:805px;top:311px;width:98px;height:22px;background:#d4d0c8;border:1px solid #fff;border-right:1px solid #404040;border-bottom:0;border-radius:3px 3px 0 0;box-sizing:border-box"></div>
<div class="a" style="left:903px;top:313px;width:60px;height:19px;background:#d4d0c8;border:1px solid #fff;border-bottom:0;border-radius:3px 3px 0 0;box-sizing:border-box"></div>
<div class="t cj" id="rt0" style="left:811px;top:313px">当前捕捉进程</div>
<div class="t cj" id="rt1" style="left:908px;top:314px">所有捕捉进程</div>
<div class="a" style="left:812px;top:341px;width:119px;height:18px;background:#f4f4f4"></div>
<div class="t cj" id="p0" style="left:815px;top:341px;font-weight:bold;">标题</div>
<div class="t" id="pv0" style="left:935px;top:341px">iex</div>
<div class="a" style="left:812px;top:359px;width:137px;height:18px;background:#f4f4f4"></div>
<div class="t cj" id="p1" style="left:815px;top:359px;font-weight:bold;">性能</div>
<div class="t cj" id="p2" style="left:823px;top:377px;">使用时间</div>
<div class="t" id="pv2" style="left:935px;top:377px">+1</div>
<div class="t cj" id="p3" style="left:823px;top:395px;">循环次数</div>
<div class="t" id="pv3" style="left:935px;top:395px">34</div>
<div class="t cj" id="p4" style="left:823px;top:413px;">接收字节数</div>
<div class="t" id="pv4" style="left:935px;top:413px">59</div>
<div class="t cj" id="p5" style="left:823px;top:431px;">发送字节数</div>
<div class="t" id="pv5" style="left:935px;top:431px">60</div>
<div class="t cj" id="p6" style="left:823px;top:449px;">压缩节省字节数</div>
<div class="t" id="pv6" style="left:935px;top:449px">14</div>
<div class="t cj" id="p7" style="left:823px;top:467px;"><span class="l">DNS</span>查找次数</div>
<div class="t" id="pv7" style="left:935px;top:467px">3</div>
<div class="t cj" id="p8" style="left:823px;top:485px;"><span class="l">TCP</span>连接数</div>
<div class="t" id="pv8" style="left:935px;top:485px">11</div>
<div class="a" style="left:812px;top:503px;width:137px;height:18px;background:#f4f4f4"></div>
<div class="t cj" id="p9" style="left:815px;top:503px;font-weight:bold;">状态码<span class="l">(</span>双击应用<span class="l">...</span></div>
<div class="t cj" id="p10" style="left:823px;top:520px;"><span class="l">200</span></div>
<div class="t" id="pv10" style="left:935px;top:521px">11</div>
<div class="t cj" id="p11" style="left:823px;top:538px;"><span class="l">302</span></div>
<div class="t" id="pv11" style="left:935px;top:539px">2</div>
<div class="t cj" id="p12" style="left:823px;top:556px;"><span class="l">304</span></div>
<div class="t" id="pv12" style="left:935px;top:557px">20</div>
<div class="t cj" id="p13" style="left:823px;top:574px;"><span class="l">404</span></div>
<div class="t" id="pv13" style="left:935px;top:575px">1</div>
<div class="a" style="left:811px;top:600px;width:138px;height:2px;background:#d4d0c8"></div>
</div></body></html>
